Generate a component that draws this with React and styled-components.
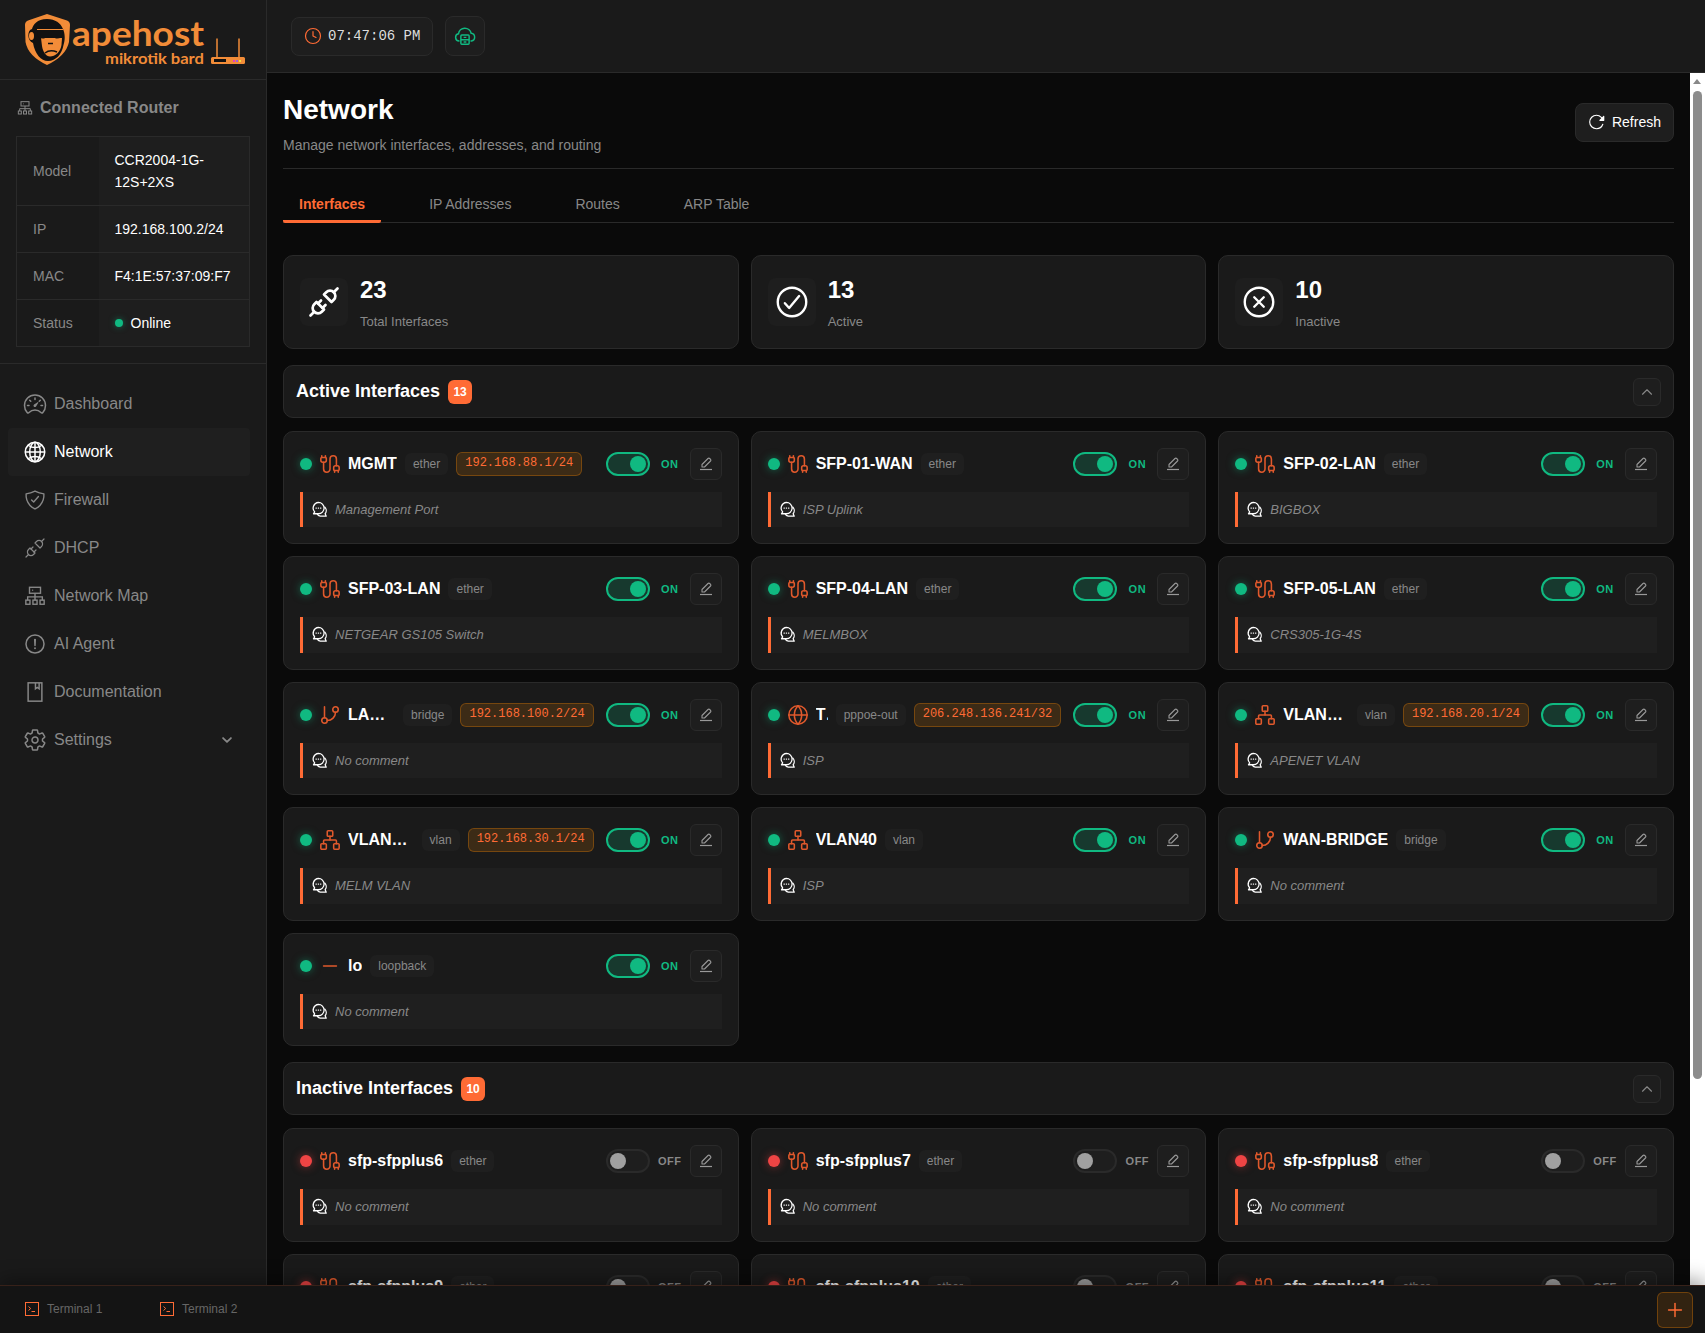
import React from "react";
import styled, { createGlobalStyle } from "styled-components";
import { Cable, ChevronUp, Clock, GitBranch, Globe, Minus, Network as NetworkIcon, Plus } from "lucide-react";
import {
  IoAlertCircleOutline,
  IoCheckmarkCircleOutline,
  IoChevronDown,
  IoCloseCircleOutline,
  IoGlobeOutline,
  IoReloadOutline,
  IoSettingsOutline,
  IoShieldCheckmarkOutline,
  IoSpeedometerOutline,
} from "react-icons/io5";
import { TbPlugConnected } from "react-icons/tb";

const GlobalStyle = createGlobalStyle`
  * { box-sizing: border-box; }
  html, body { margin: 0; height: 100%; overflow: hidden; }
  body {
    background: #0a0a0a;
    color: #fff;
    font-family: "Liberation Sans", Arial, sans-serif;
    font-size: 14px;
  }
`;

const Shell = styled.div`
  display: flex;
  height: 100vh;
  position: relative;
`;

const SideBar = styled.aside`
  width: 267px;
  flex-shrink: 0;
  background: #1a1a1a;
  border-right: 1px solid #2a2a2a;
`;

const LogoBar = styled.div`
  height: 80px;
  border-bottom: 1px solid #2a2a2a;
  svg { display: block; }
`;

const RouterBox = styled.div`
  padding: 16px;
  border-bottom: 1px solid #2a2a2a;
`;

const RouterTitle = styled.div`
  display: flex;
  align-items: center;
  gap: 7px;
  height: 22px;
  margin: 1px 0 17px;
  padding-left: 1px;
  color: #888;
  font-size: 16px;
  font-weight: 700;
`;

const InfoTable = styled.table`
  width: 100%;
  border-collapse: collapse;
  table-layout: fixed;
  border: 1px solid #2a2a2a;
  line-height: 22px;
  td { border: 1px solid #2a2a2a; padding: 12px 16px; }
  td:first-child { width: 82px; color: #888; background: #1a1a1a; border-right: 0; }
  td:last-child { color: #fff; background: #1e1e1e; border-left: 0; }
`;

const OnlineDot = styled.span`
  display: inline-block;
  width: 8px;
  height: 8px;
  margin-right: 8px;
  border-radius: 50%;
  background: #10b981;
  box-shadow: 0 0 6px rgba(16, 185, 129, 0.5);
  vertical-align: 1px;
`;

const Nav = styled.nav`
  padding: 16px 8px;
  width: 258px;
`;

const NavItem = styled.div`
  display: flex;
  align-items: center;
  gap: 8px;
  height: 48px;
  padding: 0 16px;
  border-radius: 4px;
  font-size: 16px;
  color: ${(p) => (p.$active ? "#fff" : "#888")};
  background: ${(p) => (p.$active ? "#1f1f1f" : "transparent")};
`;

const NavIcon = styled.span`
  display: flex;
  align-items: center;
  justify-content: center;
  width: 22px;
  height: 24px;
  svg { flex-shrink: 0; }
`;

const NavChevron = styled.span`
  display: flex;
  margin-left: auto;
  svg path { stroke-width: 64px; }
`;

const Right = styled.div`
  flex: 1;
  min-width: 0;
  display: flex;
  flex-direction: column;
`;

const TopBar = styled.header`
  height: 73px;
  flex-shrink: 0;
  display: flex;
  align-items: center;
  gap: 12px;
  padding: 0 24px;
  background: #1a1a1a;
  border-bottom: 1px solid #2a2a2a;
`;

const ClockPill = styled.div`
  display: flex;
  align-items: center;
  gap: 6px;
  height: 39px;
  padding: 0 12px;
  border: 1px solid #2a2a2a;
  border-radius: 8px;
  background: #1e1e1e;
  color: #ddd;
  font-family: "Liberation Mono", monospace;
  font-size: 14px;
  svg { color: #ff6b35; }
`;

const CloudButton = styled.div`
  display: flex;
  align-items: center;
  justify-content: center;
  width: 40px;
  height: 40px;
  border: 1px solid #2a2a2a;
  border-radius: 8px;
  background: #1e1e1e;
  color: #10b981;
`;

const Body = styled.div`
  flex: 1;
  min-height: 0;
  display: flex;
`;

const Main = styled.main`
  flex: 1;
  min-width: 0;
  overflow: hidden;
  padding: 17px 16px 16px;
`;

const ScrollRail = styled.div`
  width: 15px;
  flex-shrink: 0;
  padding: 6px 3px 0;
  background: #fff;
`;

const ScrollArrow = styled.div`
  width: 0;
  height: 0;
  border-left: 4.5px solid transparent;
  border-right: 4.5px solid transparent;
  border-bottom: 5px solid #888;
`;

const ScrollThumb = styled.div`
  height: 988px;
  margin-top: 7px;
  border-radius: 5px;
  background: #8c8c8c;
`;

const PageHead = styled.div`
  display: flex;
  align-items: center;
  justify-content: space-between;
  padding-bottom: 12px;
  border-bottom: 1px solid #2a2a2a;
`;

const PageTitle = styled.h1`
  margin: 0 0 5px;
  font-size: 28px;
  font-weight: 700;
  line-height: 39px;
`;

const PageSub = styled.p`
  margin: 0;
  color: #888;
  font-size: 14px;
  line-height: 22.4px;
`;

const RefreshButton = styled.button`
  display: flex;
  align-items: center;
  gap: 6px;
  height: 39px;
  margin-bottom: 2px;
  padding: 0 12px;
  border: 1px solid #2a2a2a;
  border-radius: 8px;
  background: #1e1e1e;
  color: #fff;
  font-family: inherit;
  font-size: 14px;
`;

const Tabs = styled.div`
  display: flex;
  gap: 32px;
  margin: 16px 0 32px;
  border-bottom: 1px solid #2a2a2a;
`;

const Tab = styled.div`
  height: 38px;
  margin-bottom: -1px;
  padding: 11px 16px 0;
  line-height: 16px;
  font-size: 14px;
  font-weight: ${(p) => (p.$active ? 700 : 400)};
  color: ${(p) => (p.$active ? "#ff6b35" : "#888")};
  border-bottom: 3px solid ${(p) => (p.$active ? "#ff6b35" : "transparent")};
  border-radius: 2px;
`;

const ThreeCols = styled.div`
  display: grid;
  grid-template-columns: repeat(3, 1fr);
  gap: 12px;
`;

const StatCard = styled.div`
  display: flex;
  align-items: center;
  gap: 12px;
  height: 94px;
  padding: 0 16px;
  background: #1a1a1a;
  border: 1px solid #2a2a2a;
  border-radius: 10px;
`;

const StatIcon = styled.div`
  display: flex;
  align-items: center;
  justify-content: center;
  width: 48px;
  height: 48px;
  border-radius: 8px;
  background: #1e1e1e;
  color: #fff;
`;

const StatValue = styled.div`
  font-size: 24px;
  font-weight: 700;
  line-height: 34px;
`;

const StatLabel = styled.div`
  margin-top: 5px;
  color: #888;
  font-size: 13px;
  line-height: 20px;
`;

const SectionHead = styled.div`
  display: flex;
  align-items: center;
  gap: 8px;
  height: 53px;
  margin: ${(p) => (p.$first ? "16px 0 12.5px" : "16px 0 13px")};
  padding: 0 12px;
  background: #1a1a1a;
  border: 1px solid #2a2a2a;
  border-radius: 10px;
`;

const SectionTitle = styled.div`
  font-size: 18px;
  font-weight: 700;
`;

const CountBadge = styled.div`
  display: flex;
  align-items: center;
  justify-content: center;
  min-width: 24px;
  height: 24px;
  border-radius: 6px;
  background: #ff6b35;
  color: #fff;
  font-size: 12px;
  font-weight: 700;
`;

const Collapse = styled.div`
  display: flex;
  align-items: center;
  justify-content: center;
  width: 28px;
  height: 28px;
  margin-left: auto;
  border: 1px solid #2a2a2a;
  border-radius: 6px;
  background: #1e1e1e;
  color: #888;
`;

const Card = styled.div`
  padding: 16px;
  background: #1a1a1a;
  border: 1px solid #2a2a2a;
  border-radius: 10px;
  min-width: 0;
`;

const CardTop = styled.div`
  display: flex;
  align-items: center;
  gap: 12px;
  height: 32px;
  margin-bottom: 12px;
`;

const CardLeft = styled.div`
  flex: 1;
  min-width: 0;
  display: flex;
  align-items: center;
  gap: 8px;
`;

const Dot = styled.span`
  width: 12px;
  height: 12px;
  flex-shrink: 0;
  border-radius: 50%;
  background: ${(p) => (p.$on ? "#10b981" : "#ef4444")};
  box-shadow: 0 0 8px ${(p) => (p.$on ? "rgba(16, 185, 129, 0.5)" : "rgba(239, 68, 68, 0.5)")};
`;

const TypeIcon = styled.span`
  display: flex;
  justify-content: center;
  width: 20px;
  flex-shrink: 0;
  color: #e0592c;
  svg { flex-shrink: 0; }
`;

const Name = styled.span`
  min-width: 0;
  overflow: hidden;
  white-space: nowrap;
  text-overflow: ellipsis;
  font-size: 16px;
  font-weight: 700;
`;

const TypeTag = styled.span`
  flex-shrink: 0;
  height: 22px;
  padding: 0 8px;
  border-radius: 6px;
  background: #1f1f1f;
  color: #888;
  font-size: 12px;
  line-height: 22px;
`;

const IpPill = styled.span`
  flex-shrink: 0;
  height: 24px;
  padding: 0 8px;
  border: 1px solid rgba(255, 140, 0, 0.3);
  border-radius: 6px;
  background: rgba(255, 140, 0, 0.15);
  color: #ff6b35;
  font-family: "Liberation Mono", monospace;
  font-size: 12px;
  line-height: 21px;
`;

const Toggle = styled.span`
  display: flex;
  align-items: center;
  justify-content: ${(p) => (p.$on ? "flex-end" : "flex-start")};
  flex-shrink: 0;
  width: 44px;
  height: 24px;
  padding: 2px;
  border: 2px solid ${(p) => (p.$on ? "#10b981" : "#2a2a2a")};
  border-radius: 12px;
  background: ${(p) => (p.$on ? "rgba(16, 185, 129, 0.2)" : "#1e1e1e")};
  &::after {
    content: "";
    width: 16px;
    height: 16px;
    border-radius: 50%;
    background: ${(p) => (p.$on ? "#10b981" : "#a0a0a0")};
  }
`;

const ToggleGroup = styled.div`
  display: flex;
  align-items: center;
  gap: 8px;
  flex-shrink: 0;
`;

const ToggleLabel = styled.span`
  width: 24px;
  text-align: center;
  font-size: 11px;
  font-weight: 700;
  letter-spacing: 0.5px;
  white-space: nowrap;
  color: ${(p) => (p.$on ? "#10b981" : "#888")};
`;

const EditButton = styled.span`
  display: flex;
  align-items: center;
  justify-content: center;
  width: 32px;
  height: 32px;
  border: 1px solid #2a2a2a;
  border-radius: 6px;
  background: #1e1e1e;
  color: #999;
`;

const Comment = styled.div`
  display: flex;
  align-items: center;
  gap: 7px;
  height: 35.5px;
  padding: 0 0 0.5px 8px;
  border-left: 3px solid #ff6b35;
  background: #1f1f1f;
  color: #888;
  font-size: 13px;
  font-style: italic;
  svg { color: #fff; flex-shrink: 0; }
`;

const Footer = styled.footer`
  position: absolute;
  left: 0;
  right: 0;
  bottom: 0;
  z-index: 5;
  display: flex;
  align-items: center;
  height: 48px;
  padding: 0 12px 0 25px;
  background: #141414;
  border-top: 1px solid rgba(255, 107, 53, 0.15);
  box-shadow: 0 -4px 20px rgba(0, 0, 0, 0.4);
`;

const TermTab = styled.div`
  display: flex;
  align-items: center;
  gap: 8px;
  width: 135px;
  margin-bottom: 2px;
  color: #666;
  font-size: 12px;
  svg { color: #ff6b35; }
`;

const AddTerm = styled.div`
  display: flex;
  align-items: center;
  justify-content: center;
  width: 36px;
  height: 36px;
  margin-left: auto;
  border: 1px solid rgba(255, 140, 0, 0.3);
  border-radius: 6px;
  background: rgba(255, 140, 0, 0.13);
  color: #ff6b35;
`;

const TopologyIcon = ({ size = 22 }) => (
  <svg width={size} height={size} viewBox="0 0 24 24" fill="none" stroke="currentColor" strokeWidth="1.5">
    <rect x="6" y="2.5" width="12" height="6.5" />
    <path d="M9 5.75h1" />
    <path d="M12 9v4M4 16.5V13h16v3.5M12 13v3.5" />
    <rect x="2" y="16.5" width="4.5" height="4.5" />
    <rect x="9.75" y="16.5" width="4.5" height="4.5" />
    <rect x="17.5" y="16.5" width="4.5" height="4.5" />
  </svg>
);

const BookIcon = () => (
  <svg width="22" height="22" viewBox="0 0 24 24" fill="none" stroke="currentColor" strokeWidth="1.6">
    <rect x="4.5" y="2" width="15" height="20" />
    <path d="M12.5 2v6.5l2-1.5 2 1.5V2" />
  </svg>
);

const CloudServerIcon = () => (
  <svg width="22" height="22" viewBox="0 0 24 24" fill="none" stroke="currentColor" strokeWidth="1.6" strokeLinejoin="round">
    <path d="M6 17.5H5.5a4 4 0 0 1-.6-7.9A7 7 0 0 1 18.7 9a4.3 4.3 0 0 1 .3 8.5H18" />
    <rect x="7.5" y="11" width="9" height="10" rx="1" />
    <path d="M7.5 16h9M10.500 13.500h3M10.500 18.500h3" />
  </svg>
);

const TerminalIcon = () => (
  <svg width="14" height="14" viewBox="0 0 14 14" fill="none" stroke="currentColor">
    <rect x="0.5" y="0.5" width="13" height="13" />
    <path d="M3.500 4.500l2.200 2-2.200 2M6.500 9.500h3.500" />
  </svg>
);

const ChatIcon = () => (
  <svg width="17" height="17" viewBox="0 0 24 24" fill="none" stroke="currentColor" strokeWidth="1.8" strokeLinejoin="round">
    <path d="M10.500 2a8 8 0 0 1 0 16H3.500l1.700-2.600A8 8 0 0 1 10.500 2z" />
    <path d="M19 8a7.500 7.500 0 0 1 1 10l1.500 3.500H13a6 6 0 0 1-4.500-3.700" />
    <path d="M7 10h.6M10.200 10h.6M13.400 10h.6" strokeWidth="1.600" strokeLinecap="round" />
  </svg>
);

const EditIcon = () => (
  <svg width="16" height="16" viewBox="0 0 16 16" fill="none" stroke="currentColor" strokeWidth="1.1" strokeLinejoin="round">
    <path d="M4 11V8.500L10 2.500a1.200 1.200 0 0 1 1.700 0l.8.8a1.200 1.200 0 0 1 0 1.700L6.500 11z" />
    <path d="M2 13.500h12" strokeWidth="1.200" />
  </svg>
);

const LogoArt = () => (
  <svg width="266" height="79" viewBox="0 0 266 79">
    <path d="M47 14L67 20.500Q70 21.500 70 25L69 42Q66 56 47 65Q28 56 25.500 42L25 25Q25 21.500 28 20.500Z" fill="#f28c38" />
    <path d="M47 19C37 19 33 25 32 29C27 30 27 41 33 43C35 54 41 61 48 61C56 61 62 54 63.500 45C67 36 64 19 47 19Z" fill="#111" />
    <ellipse cx="31.500" cy="36" rx="2.500" ry="4" fill="#f28c38" />
    <path d="M41 38H62L61.500 45C60.500 52 55 56.500 50 56.500C46 56.500 43 52 42 46Z" fill="#f28c38" />
    <path d="M37 30H63L62.500 35Q61.500 39 56 38.500L51 36H49L44 38.500Q38 39 37.500 35Z" fill="#111" />
    <path d="M37 29.500H63" stroke="#f28c38" strokeWidth="1" />
    <path d="M45 53Q50 49 57 52" stroke="#111" strokeWidth="1.600" fill="none" />
    <path d="M48 43.500h5" stroke="#111" strokeWidth="1.500" />
    <text x="72" y="46" fill="#f28c38" fontFamily="Lato, 'Open Sans', sans-serif" fontWeight="700" fontSize="34" textLength="132" lengthAdjust="spacingAndGlyphs">apehost</text>
    <text x="105" y="64" fill="#f28c38" fontFamily="Lato, 'Open Sans', sans-serif" fontWeight="700" fontSize="15" textLength="99" lengthAdjust="spacingAndGlyphs">mikrotik bard</text>
    <path d="M217 38.500V58M239 38.500V58" stroke="#f28c38" strokeWidth="1.500" />
    <rect x="211" y="57" width="34" height="7" rx="1.500" fill="#f28c38" />
    <rect x="214" y="59" width="12" height="3" fill="#111" />
    <rect x="233" y="60" width="2" height="2" fill="#e040c0" />
    <rect x="236" y="60" width="2" height="2" fill="#a060e0" />
    <rect x="239" y="60" width="2" height="2" fill="#f0e040" />
  </svg>
);

const navItems = [
  ["Dashboard", <IoSpeedometerOutline size={24} />],
  ["Network", <IoGlobeOutline size={24} />],
  ["Firewall", <IoShieldCheckmarkOutline size={22} />],
  ["DHCP", <TbPlugConnected size={24} strokeWidth={1.2} />],
  ["Network Map", <TopologyIcon />],
  ["AI Agent", <IoAlertCircleOutline size={24} />],
  ["Documentation", <BookIcon />],
  ["Settings", <IoSettingsOutline size={24} />],
];

const typeIcons = {
  ether: <Cable size={22} strokeWidth={1.7} />,
  bridge: <GitBranch size={22} strokeWidth={1.7} />,
  pppoe: <Globe size={22} strokeWidth={1.7} />,
  vlan: <NetworkIcon size={22} strokeWidth={1.7} />,
  loop: <Minus size={22} strokeWidth={1.7} />,
};

const active = [
  { name: "MGMT", type: "ether", ip: "192.168.88.1/24", comment: "Management Port" },
  { name: "SFP-01-WAN", type: "ether", comment: "ISP Uplink" },
  { name: "SFP-02-LAN", type: "ether", comment: "BIGBOX" },
  { name: "SFP-03-LAN", type: "ether", comment: "NETGEAR GS105 Switch" },
  { name: "SFP-04-LAN", type: "ether", comment: "MELMBOX" },
  { name: "SFP-05-LAN", type: "ether", comment: "CRS305-1G-4S" },
  { name: "LAN-BRIDGE", type: "bridge", ip: "192.168.100.2/24" },
  { name: "TPG-PPPoE", type: "pppoe-out", icon: "pppoe", ip: "206.248.136.241/32", comment: "ISP" },
  { name: "VLAN20-APENET", type: "vlan", ip: "192.168.20.1/24", comment: "APENET VLAN" },
  { name: "VLAN30-MELM", type: "vlan", ip: "192.168.30.1/24", comment: "MELM VLAN" },
  { name: "VLAN40", type: "vlan", comment: "ISP" },
  { name: "WAN-BRIDGE", type: "bridge" },
  { name: "lo", type: "loopback", icon: "loop" },
];

const inactive = [
  "sfp-sfpplus6",
  "sfp-sfpplus7",
  "sfp-sfpplus8",
  "sfp-sfpplus9",
  "sfp-sfpplus10",
  "sfp-sfpplus11",
].map((name) => ({ name, type: "ether" }));

const InterfaceCard = ({ item, on }) => (
  <Card>
    <CardTop>
      <CardLeft>
        <Dot $on={on} />
        <TypeIcon>{typeIcons[item.icon || item.type]}</TypeIcon>
        <Name>{item.name}</Name>
        <TypeTag>{item.type}</TypeTag>
        {item.ip && <IpPill>{item.ip}</IpPill>}
      </CardLeft>
      <ToggleGroup>
        <Toggle $on={on} />
        <ToggleLabel $on={on}>{on ? "ON" : "OFF"}</ToggleLabel>
        <EditButton>
          <EditIcon />
        </EditButton>
      </ToggleGroup>
    </CardTop>
    <Comment>
      <ChatIcon />
      {item.comment || "No comment"}
    </Comment>
  </Card>
);

const App = () => (
  <Shell>
    <GlobalStyle />
    <SideBar>
      <LogoBar>
        <LogoArt />
      </LogoBar>
      <RouterBox>
        <RouterTitle>
          <TopologyIcon size={16} />
          Connected Router
        </RouterTitle>
        <InfoTable>
          <tbody>
            <tr><td>Model</td><td>CCR2004-1G-12S+2XS</td></tr>
            <tr><td>IP</td><td>192.168.100.2/24</td></tr>
            <tr><td>MAC</td><td>F4:1E:57:37:09:F7</td></tr>
            <tr><td>Status</td><td><OnlineDot />Online</td></tr>
          </tbody>
        </InfoTable>
      </RouterBox>
      <Nav>
        {navItems.map(([label, icon]) => (
          <NavItem key={label} $active={label === "Network"}>
            <NavIcon>{icon}</NavIcon>
            {label}
            {label === "Settings" && (
              <NavChevron>
                <IoChevronDown size={14} />
              </NavChevron>
            )}
          </NavItem>
        ))}
      </Nav>
    </SideBar>
    <Right>
      <TopBar>
        <ClockPill>
          <Clock size={18} strokeWidth={1.6} />
          07:47:06 PM
        </ClockPill>
        <CloudButton>
          <CloudServerIcon />
        </CloudButton>
      </TopBar>
      <Body>
        <Main>
          <PageHead>
            <div>
              <PageTitle>Network</PageTitle>
              <PageSub>Manage network interfaces, addresses, and routing</PageSub>
            </div>
            <RefreshButton>
              <IoReloadOutline size={18} />
              Refresh
            </RefreshButton>
          </PageHead>
          <Tabs>
            <Tab $active>Interfaces</Tab>
            <Tab>IP Addresses</Tab>
            <Tab>Routes</Tab>
            <Tab>ARP Table</Tab>
          </Tabs>
          <ThreeCols>
            <StatCard>
              <StatIcon><TbPlugConnected size={36} strokeWidth={1.8} /></StatIcon>
              <div><StatValue>23</StatValue><StatLabel>Total Interfaces</StatLabel></div>
            </StatCard>
            <StatCard>
              <StatIcon><IoCheckmarkCircleOutline size={38} /></StatIcon>
              <div><StatValue>13</StatValue><StatLabel>Active</StatLabel></div>
            </StatCard>
            <StatCard>
              <StatIcon><IoCloseCircleOutline size={38} /></StatIcon>
              <div><StatValue>10</StatValue><StatLabel>Inactive</StatLabel></div>
            </StatCard>
          </ThreeCols>
          <SectionHead $first>
            <SectionTitle>Active Interfaces</SectionTitle>
            <CountBadge>13</CountBadge>
            <Collapse><ChevronUp size={18} strokeWidth={1.5} /></Collapse>
          </SectionHead>
          <ThreeCols>
            {active.map((item) => (
              <InterfaceCard key={item.name} item={item} on />
            ))}
          </ThreeCols>
          <SectionHead>
            <SectionTitle>Inactive Interfaces</SectionTitle>
            <CountBadge>10</CountBadge>
            <Collapse><ChevronUp size={18} strokeWidth={1.5} /></Collapse>
          </SectionHead>
          <ThreeCols>
            {inactive.map((item) => (
              <InterfaceCard key={item.name} item={item} on={false} />
            ))}
          </ThreeCols>
        </Main>
        <ScrollRail>
          <ScrollArrow />
          <ScrollThumb />
        </ScrollRail>
      </Body>
    </Right>
    <Footer>
      <TermTab><TerminalIcon />Terminal 1</TermTab>
      <TermTab><TerminalIcon />Terminal 2</TermTab>
      <AddTerm><Plus size={22} strokeWidth={1.6} /></AddTerm>
    </Footer>
  </Shell>
);

export default App;
